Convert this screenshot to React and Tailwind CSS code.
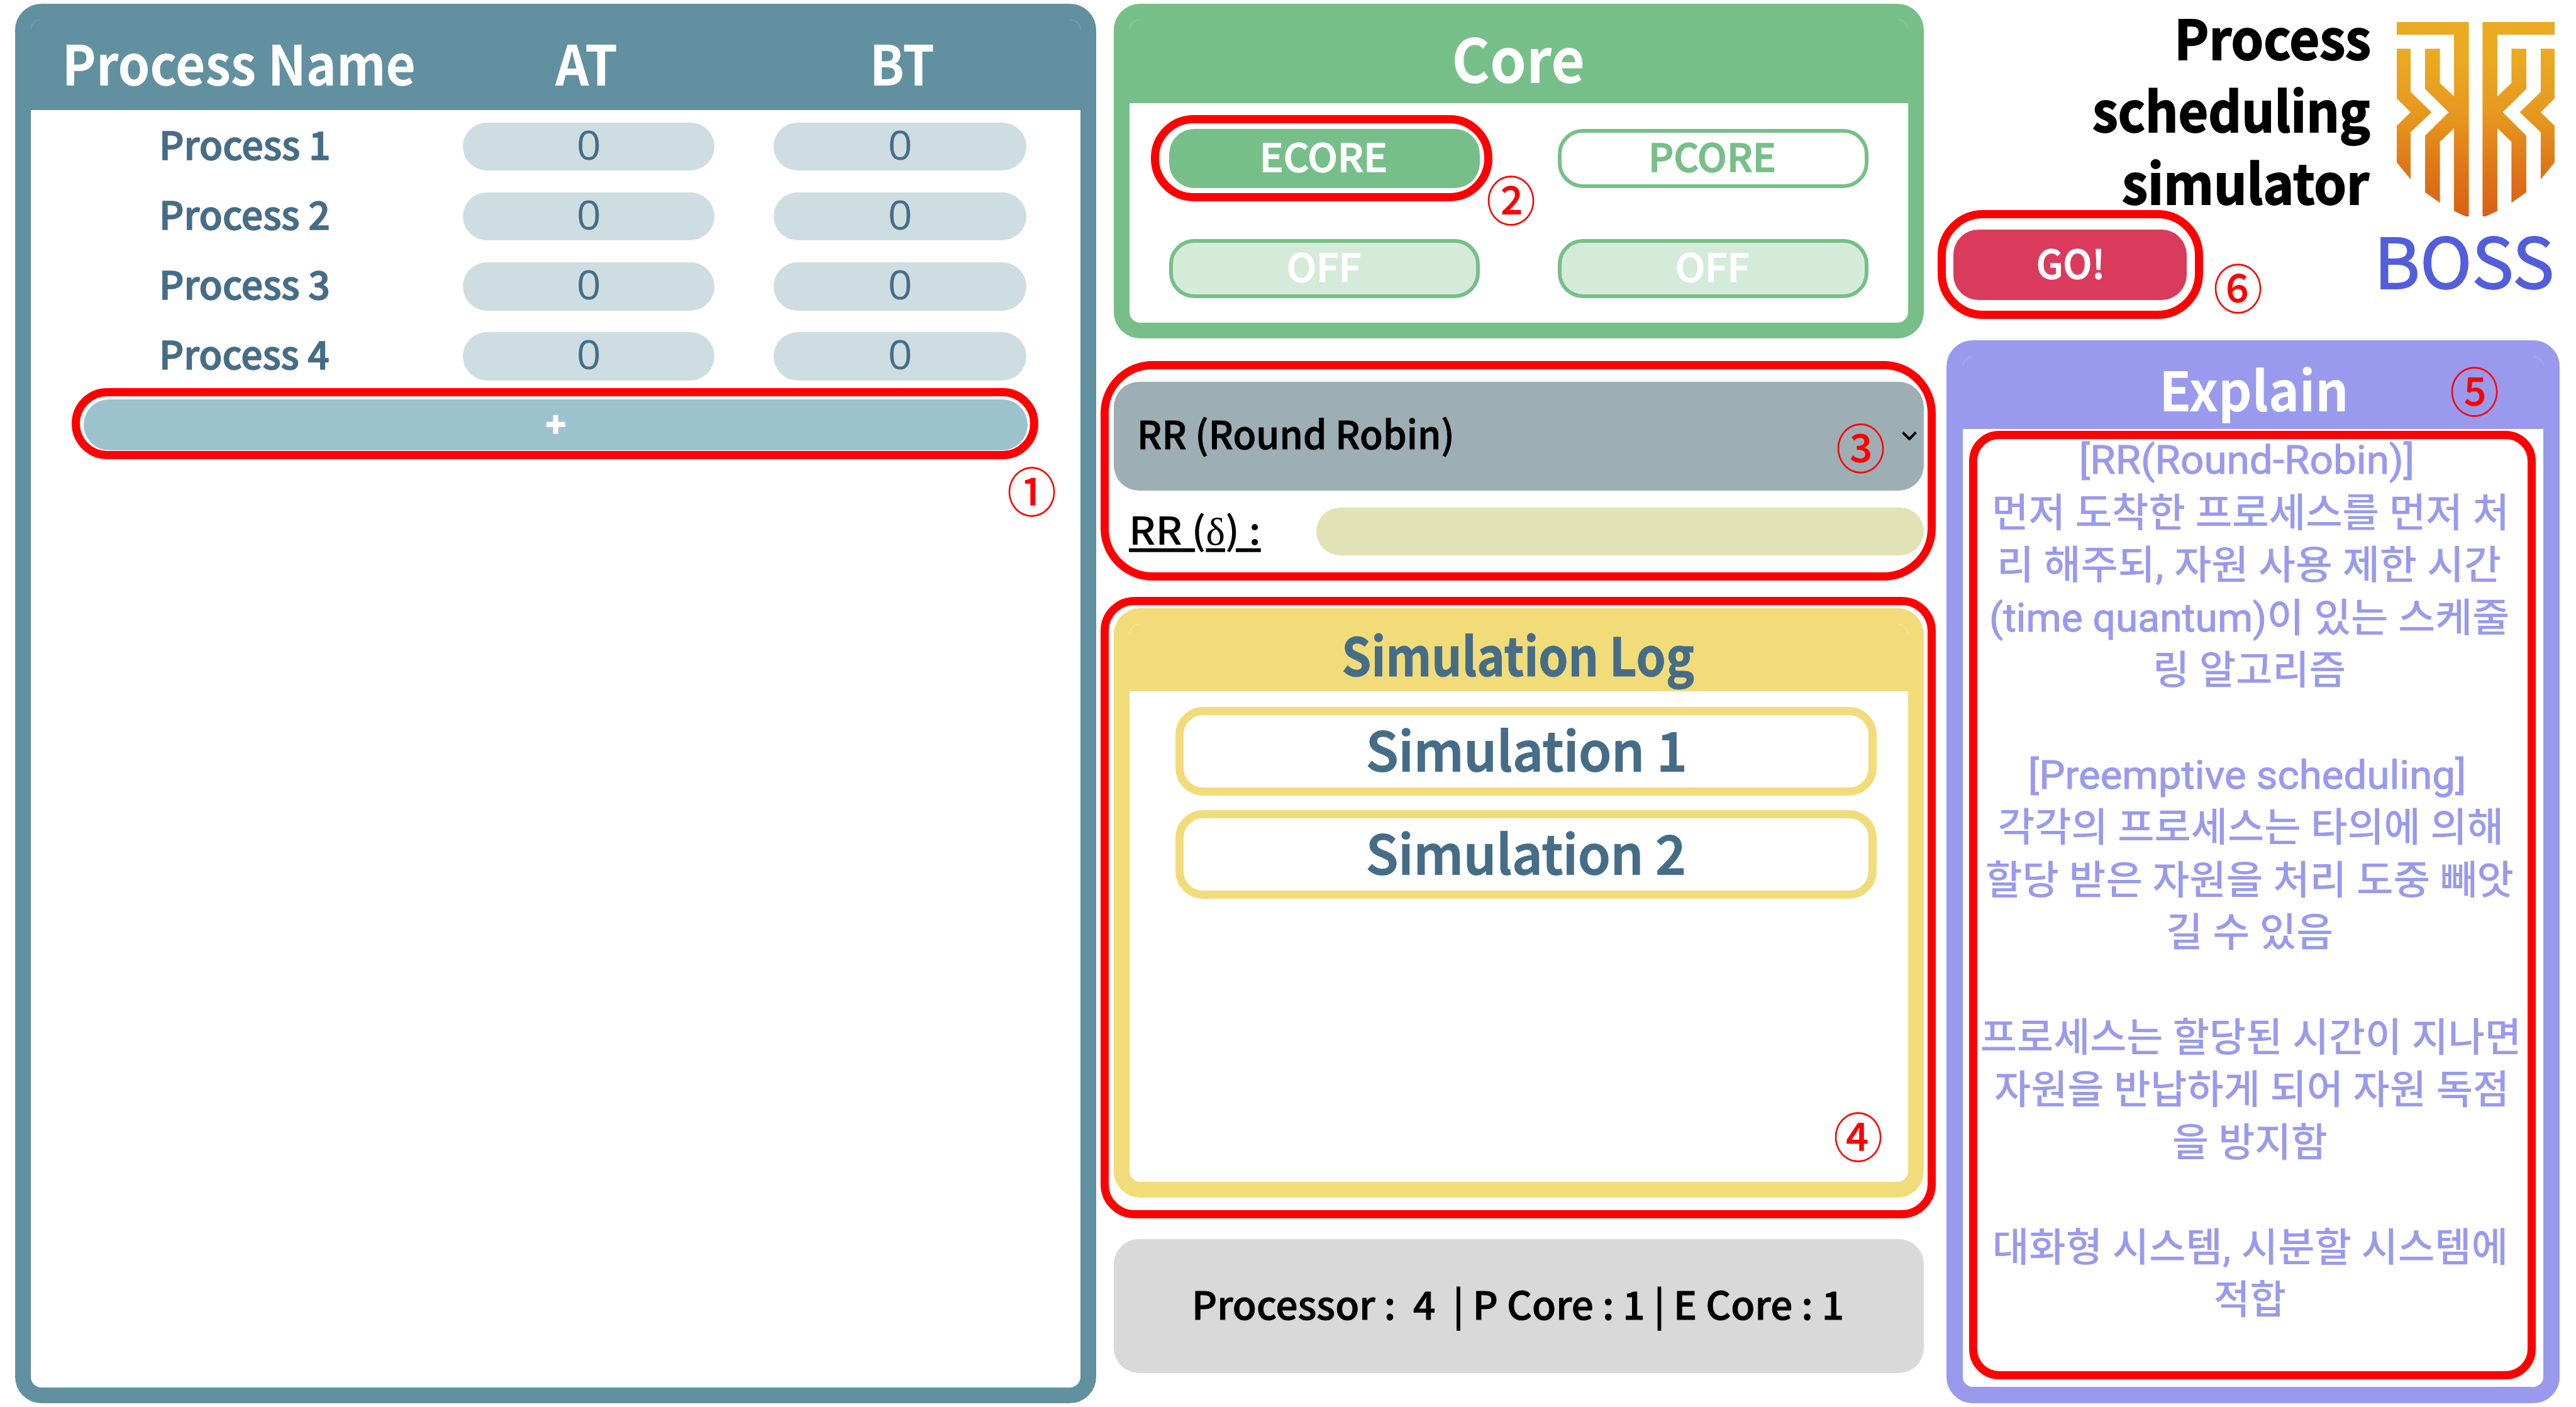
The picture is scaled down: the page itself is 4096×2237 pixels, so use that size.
import React, { useLayoutEffect, useRef, useState } from "react";

/* Text whose ink spans exactly `w` pixels; with `advance`, its advance width does. */
function Fit({ w, advance = false, lift = "-translate-y-[0.07em]", inner = "", className = "", children }) {
  const ref = useRef(null);
  const [t, setT] = useState("none");
  useLayoutEffect(() => {
    const el = ref.current;
    if (advance) {
      setT(`scaleX(${w / el.offsetWidth})`);
      return;
    }
    const cs = getComputedStyle(el);
    const ctx = document.createElement("canvas").getContext("2d");
    ctx.font = `${cs.fontWeight} ${cs.fontSize} ${cs.fontFamily}`;
    const m = ctx.measureText(el.textContent);
    const s = w / (m.actualBoundingBoxLeft + m.actualBoundingBoxRight);
    setT(`translateX(${m.actualBoundingBoxLeft * s}px) scaleX(${s})`);
  }, [w, advance]);
  return (
    <span className={`block shrink-0 leading-none ${className}`} style={{ width: w }}>
      <span className={`block ${lift}`}>
        <span
          ref={ref}
          className={`inline-block origin-left whitespace-pre align-top ${inner}`}
          style={{ transform: t }}
        >
          {children}
        </span>
      </span>
    </span>
  );
}

function Mark({ className, children }) {
  return (
    <div className={`absolute flex h-[75px] items-center text-[#ff0000] ${className}`}>
      <Fit w={75} lift="-translate-y-[0.055em]" className="text-[84px] font-medium">{children}</Fit>
    </div>
  );
}

function Ring({ className }) {
  return <div className={`pointer-events-none absolute border-[13px] border-[#ff0000] ${className}`} />;
}

function Zero() {
  return (
    <Fit w={33} lift="-translate-y-[0.031em]" className="-mt-[2px] font-['Open_Sans',sans-serif] text-[64px]">0</Fit>
  );
}

function ProcessPanel() {
  return (
    <section className="mt-[6px] flex h-[2225px] w-[1719px] shrink-0 flex-col overflow-hidden rounded-[42px] border-[25px] border-[#6191a1] bg-white">
      <header className="-mt-[26px] flex h-[170px] shrink-0 items-center bg-[#6191a1] pt-[28px] pl-[57px] text-[88px] font-bold text-white">
        <Fit w={552}>Process Name</Fit>
        <Fit w={98} className="ml-[224px]">AT</Fit>
        <Fit w={94} className="ml-[410px]">BT</Fit>
      </header>
      <div className="flex flex-col gap-[34.5px] pt-[19.5px] text-[#466d88]">
        {[1, 2, 3, 4].map((n) => (
          <div key={n} className="flex h-[76.7px] items-center pl-[209px]">
            <Fit w={264} className="-mt-[3px] text-[61px] font-medium [-webkit-text-stroke:1.5px]">{`Process ${n}`}</Fit>
            <div className="ml-[214px] flex h-full w-[400px] items-center justify-center rounded-full bg-[#cedde2]">
              <Zero />
            </div>
            <div className="ml-[94px] flex h-full w-[402px] items-center justify-center rounded-full bg-[#cedde2]">
              <Zero />
            </div>
          </div>
        ))}
      </div>
      <button className="mt-[30px] ml-[84px] flex h-[81px] w-[1501px] shrink-0 items-center justify-center rounded-full bg-[#9cc3cd] text-white">
        <Fit w={31} lift="-translate-y-[0.031em]" className="font-['Open_Sans',sans-serif] text-[62px] font-extrabold">+</Fit>
      </button>
    </section>
  );
}

function CorePanel() {
  return (
    <section className="h-[532px] overflow-hidden rounded-[42px] border-[25px] border-[#77bf88] bg-white">
      <header className="-mt-[26px] flex h-[159px] items-center justify-center bg-[#77bf88] pt-[24px] text-[97px] font-bold text-white">
        <Fit w={204}>Core</Fit>
      </header>
      <div className="grid grid-cols-[494px_494px] gap-x-[124px] gap-y-[81.5px] pt-[41px] pl-[63px] text-[61.5px] font-medium [-webkit-text-stroke:1.5px]">
        <button className="flex h-[93.5px] items-center justify-center rounded-[40px] bg-[#77bf88] text-white">
          <Fit w={195} className="-mt-[2px]">ECORE</Fit>
        </button>
        <button className="flex h-[93.5px] items-center justify-center rounded-[40px] border-[6px] border-[#77bf88] bg-white text-[#77bf88]">
          <Fit w={195} className="-mt-[2px]">PCORE</Fit>
        </button>
        <button className="flex h-[93.5px] items-center justify-center rounded-[40px] border-[6px] border-[#77bf88] bg-[#d5ebda] text-white">
          <Fit w={113} className="-mt-[2px]">OFF</Fit>
        </button>
        <button className="flex h-[93.5px] items-center justify-center rounded-[40px] border-[6px] border-[#77bf88] bg-[#d5ebda] text-white">
          <Fit w={113} className="-mt-[2px]">OFF</Fit>
        </button>
      </div>
    </section>
  );
}

function LogPanel() {
  return (
    <section className="mt-[83.5px] h-[937px] overflow-hidden rounded-[42px] border-[25px] border-[#f2dc7a] bg-white text-[#466d88]">
      <header className="flex h-[107px] items-center justify-center rounded-t-[17px] bg-[#f2dc7a] text-[84px] font-bold [-webkit-text-stroke:1px]">
        <Fit w={557}>Simulation Log</Fit>
      </header>
      <div className="flex flex-col gap-[23.5px] pt-[25px] pl-[73px] text-[85px] font-medium [-webkit-text-stroke:2px]">
        {[1, 2].map((n) => (
          <button key={n} className="flex h-[141px] w-[1115px] items-center justify-center rounded-[44px] border-[13px] border-[#f2dc7a]">
            <Fit w={502}>{`Simulation ${n}`}</Fit>
          </button>
        ))}
      </div>
    </section>
  );
}

function Logo() {
  const half =
    "M150 112H514V1092H497L439 1065V648L368 715V1024L293 971V685L412 567L293 450V247H368V420L439 487V176H150Z M150 247H220V464L326 567L220 668V906L150 820V635L220 567L150 497Z";
  return (
    <svg viewBox="150 112 797 980" preserveAspectRatio="none" className="h-[309px] w-[251px]">
      <defs>
        <linearGradient id="gold" gradientUnits="userSpaceOnUse" x1="0" y1="112" x2="0" y2="1092">
          <stop offset="0" stopColor="#ebab23" />
          <stop offset="0.2" stopColor="#eaa921" />
          <stop offset="0.5" stopColor="#e6961f" />
          <stop offset="0.75" stopColor="#df7618" />
          <stop offset="1" stopColor="#da6016" />
        </linearGradient>
      </defs>
      <path fill="url(#gold)" d={half} />
      <path fill="url(#gold)" d={half} transform="translate(1097 0) scale(-1 1)" />
    </svg>
  );
}

const explain = [
  [<span className="font-normal [-webkit-text-stroke:1px]">[RR(Round-Robin)]</span>, 535],
  ["먼저 도착한 프로세스를 먼저 처", 811],
  ["리 해주되, 자원 사용 제한 시간", 795],
  [<><span className="font-normal [-webkit-text-stroke:1px]">(time quantum)</span>이 있는 스케줄</>, 823],
  ["링 알고리즘", 299],
  null,
  [<span className="font-normal [-webkit-text-stroke:1px]">[Preemptive scheduling]</span>, 696],
  ["각각의 프로세스는 타의에 의해", 796],
  ["할당 받은 자원을 처리 도중 빼앗", 836],
  ["길 수 있음", 260],
  null,
  ["프로세스는 할당된 시간이 지나면", 852],
  ["자원을 반납하게 되어 자원 독점", 811],
  ["을 방지함", 243],
  null,
  ["대화형 시스템, 시분할 시스템에", 811],
  ["적합", 111],
];

function ExplainPanel() {
  return (
    <section className="h-[1690px] overflow-hidden rounded-[42px] border-[26px] border-[#999aed] bg-white">
      <header className="-mt-[27px] flex h-[142.5px] items-center justify-center bg-[#999aed] pt-[24px] pl-[3px] text-[87px] font-bold text-white">
        <Fit w={289}>Explain</Fit>
      </header>
      <div className="pt-[8px] pr-[11px] font-[Roboto,'Noto_Sans_CJK_KR',sans-serif] text-[63px] font-medium text-[#999aed]">
        {explain.map((line, i) => (
          <div key={i} className="flex h-[83.45px] items-center justify-center">
            {line && <Fit w={line[1]} lift="translate-y-[0.005em]">{line[0]}</Fit>}
          </div>
        ))}
      </div>
    </section>
  );
}

export default function App() {
  return (
    <div className="relative flex h-[2237px] w-[4096px] overflow-hidden bg-white pl-[24px] font-['Noto_Sans_CJK_KR',sans-serif]">
      <ProcessPanel />

      <div className="mt-[6px] ml-[27.6px] flex w-[1288px] shrink-0 flex-col">
        <CorePanel />
        <div className="mt-[69px] flex h-[172.5px] items-center justify-between rounded-[40px] bg-[#9dafb5] pr-[11px] pl-[42px] text-black">
          <Fit w={495} className="-mt-[3px] text-[61.5px] font-medium [-webkit-text-stroke:1px]">RR (Round Robin)</Fit>
          <svg viewBox="0 0 24 14" className="h-[14px] w-[24px]">
            <path d="M1.5 1.5L12 12L22.5 1.5" fill="none" stroke="#000" strokeWidth="4" />
          </svg>
        </div>
        <div className="mt-[27px] flex h-[76.5px] items-center pl-[24px] text-black">
          <Fit
            w={210}
            advance
            inner="underline decoration-[6px] underline-offset-[6px]"
            className="mt-[3px] text-[61px] font-medium"
          >
            RR (<span className="font-['Liberation_Serif',serif] font-normal">δ</span>) :
          </Fit>
          <div className="ml-[88px] h-full flex-1 rounded-full bg-[#e1e2b5]" />
        </div>
        <LogPanel />
        <div className="mt-[66px] flex h-[213.5px] items-center justify-center rounded-[40px] bg-[#d9d9d9] text-black">
          <Fit w={1029} className="-mt-[2px] text-[61.5px] font-medium [-webkit-text-stroke:1px]">{"Processor :  4  | P Core : 1 | E Core : 1"}</Fit>
        </div>
      </div>

      <div className="mt-[6px] ml-[36.5px] flex w-[975px] shrink-0 flex-col">
        <div className="flex h-[534.5px]">
          <div className="w-[672.5px] shrink-0">
            <h1 className="text-[87px] font-bold text-black [-webkit-text-stroke:2px]">
              <div className="flex h-[115px] items-center justify-end"><Fit w={304}>Process</Fit></div>
              <div className="flex h-[115px] items-center justify-end"><Fit w={439}>scheduling</Fit></div>
              <div className="flex h-[115px] items-center justify-end"><Fit w={392}>simulator</Fit></div>
            </h1>
            <button className="mt-[14px] ml-[10.5px] flex h-[112px] w-[371px] items-center justify-center rounded-[40px] bg-[#da3b5d] text-white">
              <Fit w={101} className="-mt-[2px] text-[62px] font-medium [-webkit-text-stroke:1.5px]">GO!</Fit>
            </button>
          </div>
          <div className="ml-[18.5px] flex flex-col items-start text-[#525edb]">
            <div className="mt-[29px] ml-[24.5px]"><Logo /></div>
            <Fit w={271} className="mt-[19px] text-[111px] [-webkit-text-stroke:2px]">BOSS</Fit>
          </div>
        </div>
        <ExplainPanel />
      </div>

      <Ring className="top-[617px] left-[114px] h-[113px] w-[1537px] rounded-full" />
      <Ring className="top-[183px] left-[1830px] h-[137px] w-[543px] rounded-[68px]" />
      <Ring className="top-[574px] left-[1750px] h-[349px] w-[1328px] rounded-[83px]" />
      <Ring className="top-[949px] left-[1750px] h-[988px] w-[1328px] rounded-[54px]" />
      <Ring className="top-[685px] left-[3131px] h-[1508px] w-[901px] rounded-[48px]" />
      <Ring className="top-[334px] left-[3081px] h-[173px] w-[422px] rounded-[72px]" />
      <Mark className="top-[745px] left-[1603px]">①</Mark>
      <Mark className="top-[282px] left-[2365px]">②</Mark>
      <Mark className="top-[676px] left-[2921px]">③</Mark>
      <Mark className="top-[1771px] left-[2917px]">④</Mark>
      <Mark className="top-[586px] left-[3897px]">⑤</Mark>
      <Mark className="top-[422px] left-[3521px]">⑥</Mark>
    </div>
  );
}
